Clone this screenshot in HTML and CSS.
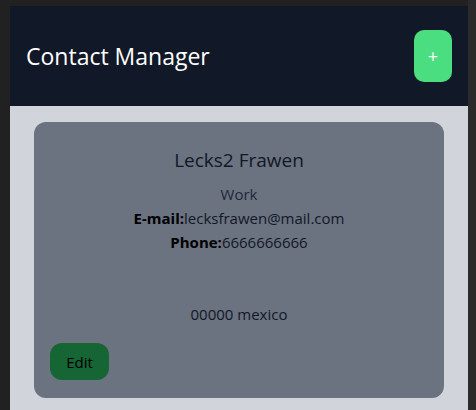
FILE: index.html
```html
<!DOCTYPE html>
<html lang="en">
<head>
<meta charset="utf-8">
<title>Contact Manager</title>
<link rel="stylesheet" href="styles.css">
</head>
<body>
<div class="frame">
  <header class="topbar">
    <h1 class="title">Contact Manager</h1>
    <button class="add-btn">+</button>
  </header>
  <main class="content">
    <article class="card">
      <h2 class="name">Lecks2 Frawen</h2>
      <p class="group">Work</p>
      <p class="line"><b>E-mail:</b>lecksfrawen@mail.com</p>
      <p class="line"><b>Phone:</b>6666666666</p>
      <p class="address">00000 mexico</p>
      <div class="actions"><button class="edit-btn">Edit</button></div>
    </article>
  </main>
</div>
</body>
</html>
```
FILE: styles.css
```css
* { box-sizing: border-box; }
html, body { margin: 0; height: 100%; }
body {
  background: linear-gradient(to left, #2b2b2b 8px, #212121 8px);
  padding: 6px 8px 0 10px;
  font-family: "Open Sans", "Noto Sans", sans-serif;
  overflow: hidden;
}
.frame {
  background: #d1d5db;
  height: 100%;
  display: flex;
  flex-direction: column;
}
.topbar {
  flex-shrink: 0;
  background: #111827;
  height: 100px;
  display: flex;
  align-items: center;
  justify-content: space-between;
  padding: 0 16px 0 16px;
}
.title {
  margin: 0;
  font-weight: 400;
  font-size: 23px;
  color: #ffffff;
}
.add-btn {
  width: 38px;
  height: 52px;
  border: none;
  border-radius: 10px;
  background: #4ade80;
  color: #ffffff;
  font-size: 18px;
  font-family: inherit;
  padding: 0;
}
.content {
  flex-shrink: 0;
  padding: 16px 24px;
}
.card {
  background: #6b7280;
  border-radius: 12px;
  padding: 24px 16px 18px;
  text-align: center;
  color: #111827;
}
.name {
  margin: 0 0 8px;
  font-weight: 400;
  font-size: 19px;
  line-height: 28px;
}
.group {
  margin: 0;
  font-size: 15px;
  line-height: 24px;
  color: #1e293b;
}
.line {
  margin: 0;
  font-size: 15px;
  line-height: 24px;
  color: #111827;
}
.line b { font-weight: 700; color: #000; }
.address {
  margin: 48px 0 0;
  font-size: 15px;
  line-height: 24px;
}
.actions {
  margin-top: 17px;
  display: flex;
}
.edit-btn {
  width: 59px;
  height: 37px;
  border: none;
  border-radius: 12px;
  background: #166534;
  color: #000;
  font-family: inherit;
  font-size: 15px;
  padding: 0;
}
```
